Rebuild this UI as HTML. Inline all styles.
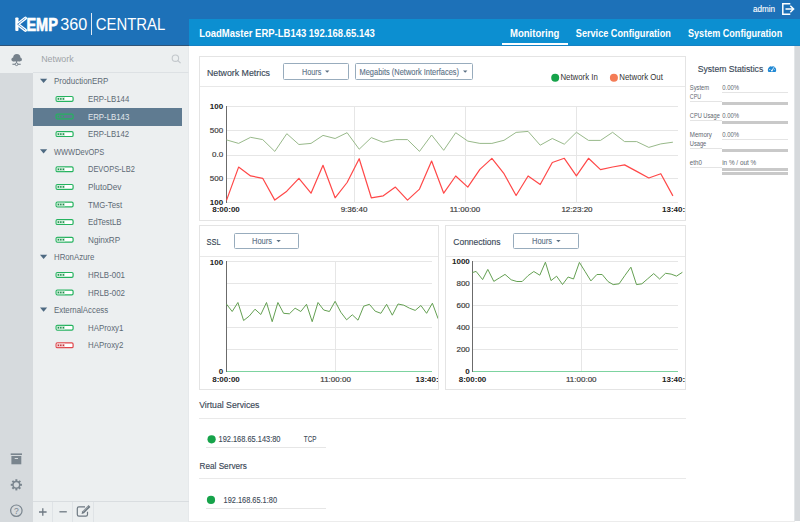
<!DOCTYPE html>
<html><head><meta charset="utf-8"><title>KEMP360 Central</title>
<style>
html,body{margin:0;padding:0;width:800px;height:522px;overflow:hidden;background:#fff;}
svg{display:block;font-family:"Liberation Sans", sans-serif;}
</style></head><body>
<svg width="800" height="522" viewBox="0 0 800 522">
<rect x="0" y="0" width="800" height="46" fill="#1d71b8"/>
<rect x="0" y="45" width="189" height="1" fill="#2f5478"/>
<rect x="189" y="19" width="611" height="27" fill="#0c8fd1"/>
<rect x="189" y="45" width="611" height="1" fill="#1582c4"/>
<rect x="15.3" y="17.4" width="3.2" height="13.5" rx="0.9" fill="#fff"/>
<path d="M25.4,18.2 L17.6,24.2 L25.4,30.2" fill="none" stroke="#fff" stroke-width="3.3" stroke-linejoin="round" stroke-linecap="round"/>
<path d="M25.4,18.2 L17.6,24.2 L25.4,30.2" fill="none" stroke="#4f8fca" stroke-width="0.9" stroke-linejoin="round"/>
<text x="26.4" y="30.8" font-size="18.6" fill="#fff" font-weight="bold" textLength="31.4" lengthAdjust="spacingAndGlyphs" stroke="#fff" stroke-width="0.7">EMP</text>
<text x="60.2" y="30.2" font-size="16" fill="#fff" textLength="27" lengthAdjust="spacingAndGlyphs">360</text>
<rect x="91" y="13" width="1" height="22" fill="#dfe9f3"/>
<text x="95.8" y="29.8" font-size="15.6" fill="#fff" textLength="69.5" lengthAdjust="spacingAndGlyphs">CENTRAL</text>
<text x="752.9" y="11.7" font-size="9" fill="#fff" textLength="22.1" lengthAdjust="spacingAndGlyphs" stroke="#fff" stroke-width="0.12">admin</text>
<g fill="none" stroke="#fff" stroke-width="1.5"><path d="M790.3,3.7 H782.8 V14.3 H790.3"/><path d="M785.5,9 H793.5 M790.3,5.8 L793.6,9 L790.3,12.2"/></g>
<text x="199.2" y="36.8" font-size="10.7" fill="#fff" font-weight="bold" textLength="175.6" lengthAdjust="spacingAndGlyphs">LoadMaster ERP-LB143 192.168.65.143</text>
<text x="510" y="36.6" font-size="11" fill="#fff" font-weight="bold" textLength="49.3" lengthAdjust="spacingAndGlyphs">Monitoring</text>
<rect x="502" y="43" width="66" height="2" fill="#fff"/>
<text x="575.8" y="36.6" font-size="11" fill="#fff" font-weight="bold" textLength="95" lengthAdjust="spacingAndGlyphs">Service Configuration</text>
<text x="688" y="36.6" font-size="11" fill="#fff" font-weight="bold" textLength="94.2" lengthAdjust="spacingAndGlyphs">System Configuration</text>
<rect x="0" y="46" width="189" height="476" fill="#eceff0"/>
<rect x="0" y="73" width="33" height="449" fill="#d6dadd"/>
<rect x="33" y="72" width="156" height="1" fill="#dde1e4"/>
<rect x="188.3" y="46" width="1.5" height="476" fill="#e4e7e9"/>
<g fill="#76818b"><circle cx="13.4" cy="59.4" r="2"/><circle cx="16.8" cy="57.6" r="3.6"/><circle cx="20" cy="59.4" r="1.9"/><rect x="13.4" y="58.5" width="6.6" height="2.9"/><rect x="12.4" y="63.7" width="8.3" height="1.1"/><rect x="16.1" y="61" width="0.9" height="2"/></g>
<circle cx="16.55" cy="64.25" r="1.35" fill="#eceff0" stroke="#76818b" stroke-width="1"/>
<text x="41.2" y="61.5" font-size="8.9" fill="#9ea3a7" textLength="32.5" lengthAdjust="spacingAndGlyphs">Network</text>
<g fill="none" stroke="#c3c8cc" stroke-width="1.1"><circle cx="175.4" cy="58.2" r="3.2"/><path d="M177.7,60.5 L180.6,63.2"/></g>
<path d="M40,78.8 H47.2 L43.6,83.0 Z" fill="#4e6a82"/>
<text x="54" y="84.4" font-size="8.9" fill="#5d6a75" textLength="54.3" lengthAdjust="spacingAndGlyphs">ProductionERP</text>
<rect x="56.1" y="96.5" width="17" height="4.8" rx="1.3" fill="#ffffff" stroke="#25b35f" stroke-width="1.2"/>
<rect x="56.8" y="97.1" width="8.2" height="3.6" fill="#cdebd7"/>
<rect x="57.7" y="98.1" width="1.4" height="1.6" fill="#1e8c4c"/>
<rect x="60.1" y="98.1" width="1.4" height="1.6" fill="#1e8c4c"/>
<rect x="62.7" y="98.1" width="1.4" height="1.6" fill="#1e8c4c"/>
<text x="88" y="102.0" font-size="8.9" fill="#5d6a75" textLength="41.3" lengthAdjust="spacingAndGlyphs">ERP-LB144</text>
<rect x="33" y="108.0" width="149" height="18" fill="#5f7b91"/>
<rect x="56.1" y="114.1" width="17" height="4.8" rx="1.3" fill="none" stroke="#25b35f" stroke-width="1.2"/>
<rect x="57.7" y="115.7" width="1.4" height="1.6" fill="#25b35f"/>
<rect x="60.1" y="115.7" width="1.4" height="1.6" fill="#25b35f"/>
<rect x="62.7" y="115.7" width="1.4" height="1.6" fill="#25b35f"/>
<text x="88" y="119.6" font-size="8.9" fill="#e3e8ec" textLength="41.3" lengthAdjust="spacingAndGlyphs">ERP-LB143</text>
<rect x="56.1" y="131.7" width="17" height="4.8" rx="1.3" fill="#ffffff" stroke="#25b35f" stroke-width="1.2"/>
<rect x="56.8" y="132.3" width="8.2" height="3.6" fill="#cdebd7"/>
<rect x="57.7" y="133.3" width="1.4" height="1.6" fill="#1e8c4c"/>
<rect x="60.1" y="133.3" width="1.4" height="1.6" fill="#1e8c4c"/>
<rect x="62.7" y="133.3" width="1.4" height="1.6" fill="#1e8c4c"/>
<text x="88" y="137.2" font-size="8.9" fill="#5d6a75" textLength="41.1" lengthAdjust="spacingAndGlyphs">ERP-LB142</text>
<path d="M40,149.2 H47.2 L43.6,153.4 Z" fill="#4e6a82"/>
<text x="54" y="154.8" font-size="8.9" fill="#5d6a75" textLength="50.2" lengthAdjust="spacingAndGlyphs">WWWDevOPS</text>
<rect x="56.1" y="166.9" width="17" height="4.8" rx="1.3" fill="#ffffff" stroke="#25b35f" stroke-width="1.2"/>
<rect x="56.8" y="167.5" width="8.2" height="3.6" fill="#cdebd7"/>
<rect x="57.7" y="168.5" width="1.4" height="1.6" fill="#1e8c4c"/>
<rect x="60.1" y="168.5" width="1.4" height="1.6" fill="#1e8c4c"/>
<rect x="62.7" y="168.5" width="1.4" height="1.6" fill="#1e8c4c"/>
<text x="88" y="172.4" font-size="8.9" fill="#5d6a75" textLength="46.9" lengthAdjust="spacingAndGlyphs">DEVOPS-LB2</text>
<rect x="56.1" y="184.5" width="17" height="4.8" rx="1.3" fill="#ffffff" stroke="#25b35f" stroke-width="1.2"/>
<rect x="56.8" y="185.1" width="8.2" height="3.6" fill="#cdebd7"/>
<rect x="57.7" y="186.1" width="1.4" height="1.6" fill="#1e8c4c"/>
<rect x="60.1" y="186.1" width="1.4" height="1.6" fill="#1e8c4c"/>
<rect x="62.7" y="186.1" width="1.4" height="1.6" fill="#1e8c4c"/>
<text x="88" y="190.0" font-size="8.9" fill="#5d6a75" textLength="33.5" lengthAdjust="spacingAndGlyphs">PlutoDev</text>
<rect x="56.1" y="202.1" width="17" height="4.8" rx="1.3" fill="#ffffff" stroke="#25b35f" stroke-width="1.2"/>
<rect x="56.8" y="202.7" width="8.2" height="3.6" fill="#cdebd7"/>
<rect x="57.7" y="203.7" width="1.4" height="1.6" fill="#1e8c4c"/>
<rect x="60.1" y="203.7" width="1.4" height="1.6" fill="#1e8c4c"/>
<rect x="62.7" y="203.7" width="1.4" height="1.6" fill="#1e8c4c"/>
<text x="88" y="207.6" font-size="8.9" fill="#5d6a75" textLength="34.1" lengthAdjust="spacingAndGlyphs">TMG-Test</text>
<rect x="56.1" y="219.7" width="17" height="4.8" rx="1.3" fill="#ffffff" stroke="#25b35f" stroke-width="1.2"/>
<rect x="56.8" y="220.3" width="8.2" height="3.6" fill="#cdebd7"/>
<rect x="57.7" y="221.3" width="1.4" height="1.6" fill="#1e8c4c"/>
<rect x="60.1" y="221.3" width="1.4" height="1.6" fill="#1e8c4c"/>
<rect x="62.7" y="221.3" width="1.4" height="1.6" fill="#1e8c4c"/>
<text x="88" y="225.2" font-size="8.9" fill="#5d6a75" textLength="33.5" lengthAdjust="spacingAndGlyphs">EdTestLB</text>
<rect x="56.1" y="237.3" width="17" height="4.8" rx="1.3" fill="#ffffff" stroke="#25b35f" stroke-width="1.2"/>
<rect x="56.8" y="237.9" width="8.2" height="3.6" fill="#cdebd7"/>
<rect x="57.7" y="238.9" width="1.4" height="1.6" fill="#1e8c4c"/>
<rect x="60.1" y="238.9" width="1.4" height="1.6" fill="#1e8c4c"/>
<rect x="62.7" y="238.9" width="1.4" height="1.6" fill="#1e8c4c"/>
<text x="88" y="242.8" font-size="8.9" fill="#5d6a75" textLength="32.2" lengthAdjust="spacingAndGlyphs">NginxRP</text>
<path d="M40,254.8 H47.2 L43.6,259.0 Z" fill="#4e6a82"/>
<text x="54" y="260.4" font-size="8.9" fill="#5d6a75" textLength="40.3" lengthAdjust="spacingAndGlyphs">HRonAzure</text>
<rect x="56.1" y="272.5" width="17" height="4.8" rx="1.3" fill="#ffffff" stroke="#25b35f" stroke-width="1.2"/>
<rect x="56.8" y="273.1" width="8.2" height="3.6" fill="#cdebd7"/>
<rect x="57.7" y="274.1" width="1.4" height="1.6" fill="#1e8c4c"/>
<rect x="60.1" y="274.1" width="1.4" height="1.6" fill="#1e8c4c"/>
<rect x="62.7" y="274.1" width="1.4" height="1.6" fill="#1e8c4c"/>
<text x="88" y="278.0" font-size="8.9" fill="#5d6a75" textLength="37" lengthAdjust="spacingAndGlyphs">HRLB-001</text>
<rect x="56.1" y="290.1" width="17" height="4.8" rx="1.3" fill="#ffffff" stroke="#25b35f" stroke-width="1.2"/>
<rect x="56.8" y="290.7" width="8.2" height="3.6" fill="#cdebd7"/>
<rect x="57.7" y="291.7" width="1.4" height="1.6" fill="#1e8c4c"/>
<rect x="60.1" y="291.7" width="1.4" height="1.6" fill="#1e8c4c"/>
<rect x="62.7" y="291.7" width="1.4" height="1.6" fill="#1e8c4c"/>
<text x="88" y="295.6" font-size="8.9" fill="#5d6a75" textLength="37" lengthAdjust="spacingAndGlyphs">HRLB-002</text>
<path d="M40,307.6 H47.2 L43.6,311.8 Z" fill="#4e6a82"/>
<text x="54" y="313.2" font-size="8.9" fill="#5d6a75" textLength="54.2" lengthAdjust="spacingAndGlyphs">ExternalAccess</text>
<rect x="56.1" y="325.3" width="17" height="4.8" rx="1.3" fill="#ffffff" stroke="#25b35f" stroke-width="1.2"/>
<rect x="56.8" y="325.9" width="8.2" height="3.6" fill="#cdebd7"/>
<rect x="57.7" y="326.9" width="1.4" height="1.6" fill="#1e8c4c"/>
<rect x="60.1" y="326.9" width="1.4" height="1.6" fill="#1e8c4c"/>
<rect x="62.7" y="326.9" width="1.4" height="1.6" fill="#1e8c4c"/>
<text x="88" y="330.8" font-size="8.9" fill="#5d6a75" textLength="35.4" lengthAdjust="spacingAndGlyphs">HAProxy1</text>
<rect x="56.1" y="342.9" width="17" height="4.8" rx="1.3" fill="#ffffff" stroke="#e0474c" stroke-width="1.2"/>
<rect x="56.8" y="343.5" width="8.2" height="3.6" fill="#f6d3d5"/>
<rect x="57.7" y="344.5" width="1.4" height="1.6" fill="#c0353a"/>
<rect x="60.1" y="344.5" width="1.4" height="1.6" fill="#c0353a"/>
<rect x="62.7" y="344.5" width="1.4" height="1.6" fill="#c0353a"/>
<text x="88" y="348.4" font-size="8.9" fill="#5d6a75" textLength="35.4" lengthAdjust="spacingAndGlyphs">HAProxy2</text>
<g fill="#7a858e"><rect x="10.7" y="453.4" width="11.3" height="1.6"/><rect x="11.4" y="456" width="9.9" height="8.3"/></g>
<rect x="14.7" y="458" width="3.3" height="1" fill="#d6dadd"/>
<g transform="translate(16.35,484.8)"><g fill="#7a858e"><rect x="-1" y="-5.6" width="2" height="11.2" transform="rotate(0)"/><rect x="-1" y="-5.6" width="2" height="11.2" transform="rotate(45)"/><rect x="-1" y="-5.6" width="2" height="11.2" transform="rotate(90)"/><rect x="-1" y="-5.6" width="2" height="11.2" transform="rotate(135)"/></g><circle r="4" fill="#7a858e"/><circle r="2.6" fill="#d6dadd"/></g>
<circle cx="16.35" cy="510.7" r="5.7" fill="none" stroke="#7a858e" stroke-width="1.2"/>
<text x="16.35" y="513.8" font-size="8.5" fill="#7a858e" text-anchor="middle">?</text>
<rect x="33" y="501" width="156" height="1" fill="#d9dde0"/>
<rect x="52" y="502" width="1" height="20" fill="#dfe3e6"/>
<rect x="72" y="502" width="1" height="20" fill="#dfe3e6"/>
<rect x="93" y="502" width="1" height="20" fill="#dfe3e6"/>
<path d="M39,512 H46.6 M42.8,508.2 V515.8" stroke="#6e7982" stroke-width="1.3"/>
<path d="M59.4,511.8 H66.8" stroke="#6e7982" stroke-width="1.3"/>
<path d="M85,506.9 H78.9 Q77.3,506.9 77.3,508.5 V514.6 Q77.3,516.2 78.9,516.2 H85.9 Q87.5,516.2 87.5,514.6 V511.8" fill="none" stroke="#6e7982" stroke-width="1.2"/>
<path d="M81.6,514 L82.2,511.4 L88.6,505.1 L90.4,506.9 L84,513.3 Z" fill="#6e7982"/><path d="M83,511.6 L88.4,506.3" stroke="#eceff0" stroke-width="0.5"/>
<rect x="189" y="46" width="606" height="476" fill="#fff"/>
<rect x="794" y="46" width="1" height="475" fill="#e3e6e8"/>
<rect x="795" y="46" width="5" height="475" fill="#d6d9dc"/>
<rect x="189" y="521" width="606" height="1" fill="#ececec"/>
<rect x="199.5" y="56.5" width="486" height="164" fill="none" stroke="#e4e4e4" stroke-width="1"/>
<rect x="200" y="86" width="485" height="1" fill="#e8e8e8"/>
<text x="206.9" y="75.6" font-size="9.8" fill="#3a4857" textLength="63.1" lengthAdjust="spacingAndGlyphs" stroke="#3a4857" stroke-width="0.15">Network Metrics</text>
<rect x="283.5" y="63.5" width="65" height="16" fill="#fff" stroke="#98acbd" stroke-width="1" rx="1"/>
<text x="302" y="74.6" font-size="8.8" fill="#5a7186" textLength="19.3" lengthAdjust="spacingAndGlyphs" stroke="#5a7186" stroke-width="0.12">Hours</text>
<path d="M325,70.6 H329.4 L327.2,72.8 Z" fill="#5b7084"/>
<rect x="355.5" y="63.5" width="117" height="16" fill="#fff" stroke="#98acbd" stroke-width="1" rx="1"/>
<text x="359.5" y="74.6" font-size="8.8" fill="#5a7186" textLength="99.5" lengthAdjust="spacingAndGlyphs" stroke="#5a7186" stroke-width="0.12">Megabits (Network Interfaces)</text>
<path d="M463,70.6 H467.4 L465.2,72.8 Z" fill="#5b7084"/>
<circle cx="555.2" cy="77.8" r="4" fill="#16a34a"/><circle cx="613.9" cy="77.8" r="4" fill="#f47c56"/>
<text x="560.4" y="80.4" font-size="8.6" fill="#333" textLength="37.4" lengthAdjust="spacingAndGlyphs">Network In</text>
<text x="619.3" y="80.4" font-size="8.6" fill="#333" textLength="43.6" lengthAdjust="spacingAndGlyphs">Network Out</text>
<rect x="227" y="106" width="451" height="1" fill="#e6e6e6"/>
<rect x="227" y="130" width="451" height="1" fill="#e6e6e6"/>
<rect x="227" y="155" width="451" height="1" fill="#e6e6e6"/>
<rect x="227" y="178" width="451" height="1" fill="#e6e6e6"/>
<rect x="227" y="202" width="451" height="1" fill="#e6e6e6"/>
<rect x="354" y="106" width="1" height="96" fill="#e6e6e6"/>
<rect x="465" y="106" width="1" height="96" fill="#e6e6e6"/>
<rect x="576" y="106" width="1" height="96" fill="#e6e6e6"/>
<rect x="226" y="106" width="1" height="97" fill="#6b6b6b"/>
<text x="223.2" y="108.8" font-size="8" fill="#222" font-weight="bold" text-anchor="end">100</text>
<text x="223.2" y="132.8" font-size="8" fill="#3a3a3a" text-anchor="end" stroke="#3a3a3a" stroke-width="0.18">500</text>
<text x="223.2" y="156.8" font-size="8" fill="#3a3a3a" text-anchor="end" stroke="#3a3a3a" stroke-width="0.18">0.0</text>
<text x="223.2" y="180.8" font-size="8" fill="#3a3a3a" text-anchor="end" stroke="#3a3a3a" stroke-width="0.18">500</text>
<text x="223.2" y="204.8" font-size="8" fill="#222" font-weight="bold" text-anchor="end">100</text>
<clipPath id="c1"><rect x="199" y="56" width="486" height="164"/></clipPath>
<text x="226" y="212.4" font-size="8" fill="#222" font-weight="bold" text-anchor="middle" clip-path="url(#c1)">8:00:00</text>
<text x="354" y="212.4" font-size="8" fill="#3a3a3a" text-anchor="middle" clip-path="url(#c1)" stroke="#3a3a3a" stroke-width="0.18">9:36:40</text>
<text x="465" y="212.4" font-size="8" fill="#3a3a3a" text-anchor="middle" clip-path="url(#c1)" stroke="#3a3a3a" stroke-width="0.18">11:00:00</text>
<text x="577" y="212.4" font-size="8" fill="#3a3a3a" text-anchor="middle" clip-path="url(#c1)" stroke="#3a3a3a" stroke-width="0.18">12:23:20</text>
<text x="678" y="212.4" font-size="8" fill="#222" font-weight="bold" text-anchor="middle" clip-path="url(#c1)">13:40:00</text>
<polyline points="226.5,139.9 238.6,143.4 250.6,137.3 262.7,139.6 274.8,151.4 286.8,133.7 298.9,144.5 311.0,143.4 323.0,135.4 335.1,138.5 347.1,132.7 359.2,149.2 371.3,137.6 383.3,142.3 395.4,139.6 407.5,139.6 419.5,151.4 431.6,135.0 443.7,150.3 455.7,132.7 467.8,141.1 479.9,143.4 491.9,143.4 504.0,140.3 516.1,132.4 528.1,131.4 540.2,145.2 552.3,138.5 564.3,144.2 576.4,132.3 588.5,140.4 600.5,140.4 612.6,132.3 624.6,141.6 636.7,141.6 648.8,147.4 660.8,143.9 672.9,142.2" fill="none" stroke="#98b98a" stroke-width="1.0" stroke-linejoin="round"/>
<polyline points="226.5,200.4 238.6,167.1 250.6,175.9 262.7,178.3 274.8,200.1 286.8,191.2 298.9,178.3 311.0,193.2 323.0,165.3 335.1,197.8 347.1,182.5 359.2,158.7 371.3,197.8 383.3,195.8 395.4,187.1 407.5,200.1 419.5,189.1 431.6,161.0 443.7,193.2 455.7,176.0 467.8,187.1 479.9,169.4 491.9,158.4 504.0,173.7 516.1,195.5 528.1,176.0 540.2,184.5 552.3,162.5 564.3,158.3 576.4,175.8 588.5,158.3 600.5,169.6 612.6,167.0 624.6,164.9 636.7,171.4 648.8,178.0 660.8,173.7 672.9,195.9" fill="none" stroke="#ff4848" stroke-width="1.2" stroke-linejoin="round"/>
<rect x="199.5" y="225.5" width="239" height="164" fill="none" stroke="#e4e4e4" stroke-width="1"/>
<rect x="200" y="256" width="238" height="1" fill="#e8e8e8"/>
<text x="206.5" y="245.2" font-size="9.8" fill="#3a4857" textLength="14.1" lengthAdjust="spacingAndGlyphs" stroke="#3a4857" stroke-width="0.15">SSL</text>
<rect x="234.5" y="233.5" width="64" height="15" fill="#fff" stroke="#98acbd" stroke-width="1" rx="1"/>
<text x="252" y="244.1" font-size="8.8" fill="#5a7186" textLength="20" lengthAdjust="spacingAndGlyphs" stroke="#5a7186" stroke-width="0.12">Hours</text>
<path d="M276.4,240.1 H280.79999999999995 L278.59999999999997,242.3 Z" fill="#5b7084"/>
<rect x="227" y="261" width="205" height="1" fill="#e6e6e6"/>
<rect x="227" y="283" width="205" height="1" fill="#e6e6e6"/>
<rect x="227" y="305" width="205" height="1" fill="#e6e6e6"/>
<rect x="227" y="327" width="205" height="1" fill="#e6e6e6"/>
<rect x="227" y="349" width="205" height="1" fill="#e6e6e6"/>
<rect x="335" y="261" width="1" height="110" fill="#e6e6e6"/>
<rect x="227" y="371" width="205" height="1" fill="#7dd3a0"/>
<rect x="226" y="261" width="1" height="111" fill="#6b6b6b"/>
<text x="223.2" y="265.2" font-size="8" fill="#222" font-weight="bold" text-anchor="end">100</text>
<text x="223.2" y="374.2" font-size="8" fill="#222" font-weight="bold" text-anchor="end">0</text>
<clipPath id="c2"><rect x="199" y="225" width="239" height="164"/></clipPath>
<text x="226" y="382" font-size="8" fill="#222" font-weight="bold" text-anchor="middle" clip-path="url(#c2)">8:00:00</text>
<text x="335.6" y="382" font-size="8" fill="#3a3a3a" text-anchor="middle" clip-path="url(#c2)" stroke="#3a3a3a" stroke-width="0.18">11:00:00</text>
<text x="431.5" y="382" font-size="8" fill="#222" font-weight="bold" text-anchor="middle" clip-path="url(#c2)">13:40:00</text>
<polyline points="226.4,304.0 232.2,311.5 237.9,302.5 243.6,320.5 249.3,316.0 255.0,309.2 260.8,314.5 266.5,302.5 272.2,321.7 277.9,302.5 283.6,313.3 289.4,313.8 295.1,308.2 300.8,311.5 306.5,304.3 312.2,321.7 318.0,302.5 323.7,310.0 329.4,311.5 335.1,301.3 340.8,312.2 346.6,319.8 352.3,314.8 358.0,320.2 363.7,306.2 369.4,304.3 375.2,311.2 380.9,313.3 386.6,304.3 392.3,315.2 398.0,304.0 403.8,305.2 409.5,308.2 415.2,310.4 420.9,305.5 426.6,313.3 432.4,303.2 438.1,318.7" fill="none" stroke="#64a052" stroke-width="1.0" stroke-linejoin="round" clip-path="url(#c2)"/>
<rect x="445.5" y="225.5" width="240" height="164" fill="none" stroke="#e4e4e4" stroke-width="1"/>
<rect x="446" y="256" width="239" height="1" fill="#e8e8e8"/>
<text x="453.3" y="244.7" font-size="9.8" fill="#3a4857" textLength="47.2" lengthAdjust="spacingAndGlyphs" stroke="#3a4857" stroke-width="0.15">Connections</text>
<rect x="513.5" y="233.5" width="65" height="15" fill="#fff" stroke="#98acbd" stroke-width="1" rx="1"/>
<text x="532" y="244.1" font-size="8.8" fill="#5a7186" textLength="20" lengthAdjust="spacingAndGlyphs" stroke="#5a7186" stroke-width="0.12">Hours</text>
<path d="M556.2,240.1 H560.6 L558.4000000000001,242.3 Z" fill="#5b7084"/>
<rect x="473" y="261" width="205" height="1" fill="#e6e6e6"/>
<rect x="473" y="283" width="205" height="1" fill="#e6e6e6"/>
<rect x="473" y="305" width="205" height="1" fill="#e6e6e6"/>
<rect x="473" y="327" width="205" height="1" fill="#e6e6e6"/>
<rect x="473" y="349" width="205" height="1" fill="#e6e6e6"/>
<rect x="581" y="261" width="1" height="110" fill="#e6e6e6"/>
<rect x="473" y="371" width="205" height="1" fill="#7dd3a0"/>
<rect x="472" y="261" width="1" height="111" fill="#6b6b6b"/>
<text x="469.8" y="264.1" font-size="8" fill="#222" font-weight="bold" text-anchor="end">1000</text>
<text x="469.8" y="286.1" font-size="8" fill="#3a3a3a" text-anchor="end" stroke="#3a3a3a" stroke-width="0.18">800</text>
<text x="469.8" y="308.1" font-size="8" fill="#3a3a3a" text-anchor="end" stroke="#3a3a3a" stroke-width="0.18">600</text>
<text x="469.8" y="330.1" font-size="8" fill="#3a3a3a" text-anchor="end" stroke="#3a3a3a" stroke-width="0.18">400</text>
<text x="469.8" y="352.1" font-size="8" fill="#3a3a3a" text-anchor="end" stroke="#3a3a3a" stroke-width="0.18">200</text>
<text x="469.8" y="374.1" font-size="8" fill="#222" font-weight="bold" text-anchor="end">0</text>
<clipPath id="c3"><rect x="445" y="225" width="240" height="164"/></clipPath>
<text x="472.5" y="382" font-size="8" fill="#222" font-weight="bold" text-anchor="middle" clip-path="url(#c3)">8:00:00</text>
<text x="581.3" y="382" font-size="8" fill="#3a3a3a" text-anchor="middle" clip-path="url(#c3)" stroke="#3a3a3a" stroke-width="0.18">11:00:00</text>
<text x="678" y="382" font-size="8" fill="#222" font-weight="bold" text-anchor="middle" clip-path="url(#c3)">13:40:00</text>
<polyline points="472.4,272.6 476.1,271.4 482.6,279.6 487.8,269.4 493.8,281.4 499.4,277.9 505.0,274.4 511.2,279.8 516.9,281.5 522.2,281.5 528.1,275.6 533.8,271.5 539.8,275.2 545.4,262.2 551.0,280.6 556.6,276.2 562.5,284.5 568.1,277.0 573.5,279.0 579.4,262.4 585.2,271.7 590.9,280.9 596.9,274.5 602.2,274.5 608.1,281.6 613.2,284.6 619.1,283.8 625.0,275.3 630.9,267.2 636.5,284.6 641.9,283.8 647.8,278.7 653.7,273.6 659.6,279.0 665.5,273.3 671.1,274.1 676.5,276.1 682.4,272.3" fill="none" stroke="#64a052" stroke-width="1.0" stroke-linejoin="round" clip-path="url(#c3)"/>
<text x="199.2" y="408.4" font-size="9.2" fill="#3a4857" textLength="60.3" lengthAdjust="spacingAndGlyphs" stroke="#3a4857" stroke-width="0.15">Virtual Services</text>
<rect x="199" y="418" width="487" height="1" fill="#e9e9e9"/>
<circle cx="211.6" cy="439.3" r="4.1" fill="#16a34a"/>
<text x="218.5" y="442.2" font-size="8.3" fill="#3c4a58" textLength="62" lengthAdjust="spacingAndGlyphs" stroke="#3c4a58" stroke-width="0.12">192.168.65.143:80</text>
<text x="303.8" y="442.2" font-size="8.3" fill="#3c4a58" textLength="12.6" lengthAdjust="spacingAndGlyphs" stroke="#3c4a58" stroke-width="0.12">TCP</text>
<rect x="206" y="447" width="120" height="1" fill="#e6e6e6"/>
<text x="199.5" y="469.3" font-size="9.2" fill="#3a4857" textLength="47.4" lengthAdjust="spacingAndGlyphs" stroke="#3a4857" stroke-width="0.15">Real Servers</text>
<rect x="199" y="478" width="487" height="1" fill="#e9e9e9"/>
<circle cx="211" cy="499.9" r="4.1" fill="#16a34a"/>
<text x="223.6" y="502.5" font-size="8.3" fill="#3c4a58" textLength="53.4" lengthAdjust="spacingAndGlyphs" stroke="#3c4a58" stroke-width="0.12">192.168.65.1:80</text>
<rect x="206" y="508" width="120" height="1" fill="#e6e6e6"/>
<text x="697.8" y="72.4" font-size="9.6" fill="#3a4857" textLength="65.4" lengthAdjust="spacingAndGlyphs" stroke="#3a4857" stroke-width="0.15">System Statistics</text>
<path d="M768.3,72.1 A4.2,4.2 0 1 1 775.7,72.1 Z" fill="#1f88d4"/><g stroke="#fff" stroke-width="0.8"><path d="M771.9,70.6 L774,67.2"/><path d="M769.2,69.6 H770.3 M771.9,66 V67 M773.8,69.6 H774.6"/></g><circle cx="771.9" cy="70.6" r="0.9" fill="#fff"/>
<text x="689.8" y="89.8" font-size="6.8" fill="#5e6770" textLength="19.3" lengthAdjust="spacingAndGlyphs">System</text>
<text x="689.8" y="98.8" font-size="6.8" fill="#5e6770" textLength="11.3" lengthAdjust="spacingAndGlyphs">CPU</text>
<text x="722.2" y="89.8" font-size="6.6" fill="#5e6770" textLength="16.8" lengthAdjust="spacingAndGlyphs">0.00%</text>
<rect x="722" y="92" width="66" height="1" fill="#e4e4e4"/>
<rect x="690" y="101" width="32" height="1" fill="#e4e4e4"/>
<rect x="722" y="102" width="66" height="3" fill="#c9c9c9"/>
<text x="689.8" y="118.1" font-size="6.8" fill="#5e6770" textLength="30" lengthAdjust="spacingAndGlyphs">CPU Usage</text>
<text x="722.2" y="118.1" font-size="6.6" fill="#5e6770" textLength="16.8" lengthAdjust="spacingAndGlyphs">0.00%</text>
<rect x="690" y="120" width="32" height="1" fill="#e4e4e4"/>
<rect x="722" y="121" width="66" height="3" fill="#c9c9c9"/>
<text x="689.8" y="136.5" font-size="6.8" fill="#5e6770" textLength="22.1" lengthAdjust="spacingAndGlyphs">Memory</text>
<text x="689.8" y="145.6" font-size="6.8" fill="#5e6770" textLength="16.5" lengthAdjust="spacingAndGlyphs">Usage</text>
<text x="722.2" y="136.5" font-size="6.6" fill="#5e6770" textLength="16.8" lengthAdjust="spacingAndGlyphs">0.00%</text>
<rect x="722" y="139" width="66" height="1" fill="#e4e4e4"/>
<rect x="690" y="148" width="32" height="1" fill="#e4e4e4"/>
<rect x="722" y="149" width="66" height="3" fill="#c9c9c9"/>
<text x="689.8" y="164.8" font-size="6.8" fill="#5e6770" textLength="12.1" lengthAdjust="spacingAndGlyphs">eth0</text>
<text x="722.2" y="164.8" font-size="6.6" fill="#5e6770" textLength="34" lengthAdjust="spacingAndGlyphs">in % / out %</text>
<rect x="690" y="167" width="32" height="1" fill="#e4e4e4"/>
<rect x="722" y="168" width="66" height="3" fill="#c9c9c9"/>
<rect x="722" y="172" width="66" height="3" fill="#c9c9c9"/>
</svg>
</body></html>
